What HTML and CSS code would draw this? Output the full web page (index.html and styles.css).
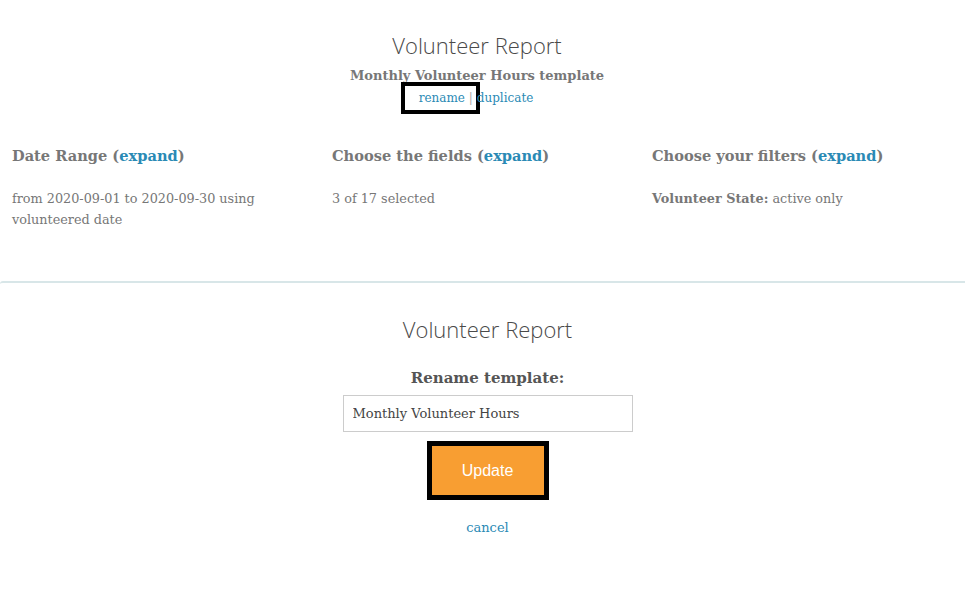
FILE: index.html
```html
<!DOCTYPE html>
<html>
<head>
<meta charset="utf-8">
<link rel="stylesheet" href="styles.css">
</head>
<body>
<div class="page">
  <section class="top">
    <h1 class="title">Volunteer Report</h1>
    <div class="subtitle">Monthly Volunteer Hours template</div>
    <div class="actions"><span class="hl"><a class="link" href="#">rename</a> <span class="sep">|</span></span><a class="link" href="#">duplicate</a></div>
  </section>
  <section class="cols">
    <div class="col">
      <h2 class="col-head">Date Range (<a class="link" href="#">expand</a>)</h2>
      <p class="col-body">from 2020-09-01 to 2020-09-30 using volunteered date</p>
    </div>
    <div class="col">
      <h2 class="col-head">Choose the fields (<a class="link" href="#">expand</a>)</h2>
      <p class="col-body">3 of 17 selected</p>
    </div>
    <div class="col">
      <h2 class="col-head">Choose your filters (<a class="link" href="#">expand</a>)</h2>
      <p class="col-body"><b>Volunteer State:</b> active only</p>
    </div>
  </section>
  <section class="panel">
    <h1 class="title">Volunteer Report</h1>
    <div class="label">Rename template:</div>
    <input class="field" type="text" value="Monthly Volunteer Hours">
    <div class="btn-box"><button class="btn">Update</button></div>
    <a class="link cancel" href="#">cancel</a>
  </section>
</div>
</body>
</html>
```
FILE: styles.css
```css
html, body {
  margin: 0;
  padding: 0;
  background: #fff;
}
body {
  font-family: "DejaVu Serif", Georgia, serif;
  color: #777;
  overflow: hidden;
}
.page {
  width: 965px;
}
.link {
  color: #2a8ab5;
  text-decoration: none;
}
.top {
  display: flex;
  flex-direction: column;
  align-items: center;
  padding: 31px 11px 0 0;
}
.title {
  margin: 0;
  font-family: "Open Sans", sans-serif;
  font-weight: 300;
  font-size: 22px;
  line-height: 28px;
  color: #4a4a4a;
}
.subtitle {
  margin-top: 9px;
  font-weight: bold;
  font-size: 13px;
  line-height: 16px;
  color: #777;
}
.actions {
  font-size: 12px;
  line-height: 18px;
  margin-top: 2px;
  padding-right: 16px;
}
.hl {
  display: inline-block;
  outline: 4px solid #000;
  outline-offset: 0;
  padding: 3px 3px 3px 14px;
  margin-right: 1px;
  line-height: 18px;
}
.sep {
  color: #aaa;
}
.cols {
  display: grid;
  grid-template-columns: 320px 320px 325px;
  padding-top: 36px;
  height: 135px;
}
.col {
  padding-left: 12px;
}
.col-head {
  margin: 0;
  font-size: 14.6px;
  line-height: 20px;
  font-weight: bold;
  color: #777;
}
.col-head .link {
  font-weight: bold;
}
.col-body {
  margin: 22px 0 0;
  font-size: 12.8px;
  line-height: 21px;
  width: 260px;
}
.col-body b {
  color: #777;
}
.panel {
  border-top: 2px solid #d8e6e8;
  border-top-left-radius: 3px;
  display: flex;
  flex-direction: column;
  align-items: center;
  padding: 32px 0 0 10px;
  height: 300px;
}
.label {
  margin-top: 25px;
  font-weight: bold;
  font-size: 15px;
  line-height: 20px;
  color: #555;
}
.field {
  margin-top: 7px;
  width: 290px;
  height: 37px;
  box-sizing: border-box;
  border: 1px solid #ccc;
  padding: 0 9px;
  font-family: "DejaVu Serif", Georgia, serif;
  font-size: 13px;
  color: #444;
  outline: none;
}
.btn-box {
  margin-top: 9px;
  border: 5px solid #000;
}
.btn {
  display: block;
  width: 112px;
  height: 49px;
  border: 0;
  background: #f89e32;
  color: #fff;
  font-family: "Liberation Sans", Arial, sans-serif;
  font-size: 16px;
  padding: 0;
}
.cancel {
  margin-top: 19px;
  font-size: 13px;
  line-height: 18px;
}
```
